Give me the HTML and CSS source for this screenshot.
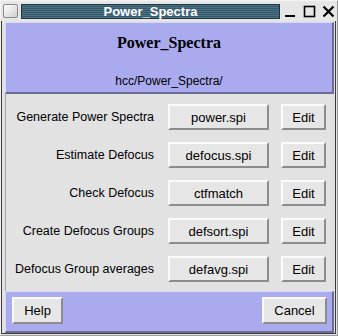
FILE: index.html
```html
<!DOCTYPE html>
<html lang="en">
<head>
    <meta charset="UTF-8">
    <title>Power_Spectra</title>
    <link rel="stylesheet" href="styles.css">
</head>
<body>
    <div class="window">
        <div class="titlebar">
            <div class="win-icon"></div>
            <div class="win-title">Power_Spectra</div>
            <div class="win-controls">
                <svg width="13" height="13" viewBox="0 0 13 13"><rect x="1" y="10" width="10" height="2" fill="#000"/></svg>
                <svg width="13" height="13" viewBox="0 0 13 13"><rect x="1.5" y="1.5" width="10" height="10" fill="none" stroke="#000" stroke-width="1.6"/></svg>
                <svg width="13" height="13" viewBox="0 0 13 13"><path d="M1.5 1.5 L11.5 11.5 M11.5 1.5 L1.5 11.5" stroke="#000" stroke-width="2.2"/></svg>
            </div>
        </div>

        <div class="client">
            <div class="header">
                <h1>Power_Spectra</h1>
                <p class="path">hcc/Power_Spectra/</p>
            </div>

            <div class="rows">
                <span class="label">Generate Power Spectra</span>
                <button class="btn">power.spi</button>
                <button class="btn">Edit</button>

                <span class="label">Estimate Defocus</span>
                <button class="btn">defocus.spi</button>
                <button class="btn">Edit</button>

                <span class="label">Check Defocus</span>
                <button class="btn">ctfmatch</button>
                <button class="btn">Edit</button>

                <span class="label">Create Defocus Groups</span>
                <button class="btn">defsort.spi</button>
                <button class="btn">Edit</button>

                <span class="label">Defocus Group averages</span>
                <button class="btn">defavg.spi</button>
                <button class="btn">Edit</button>
            </div>

            <div class="footer">
                <button class="btn help">Help</button>
                <button class="btn cancel">Cancel</button>
            </div>
        </div>
    </div>
</body>
</html>
```

FILE: styles.css
```css
body {
    margin: 0;
    padding: 0;
    font-family: "Liberation Sans", Arial, sans-serif;
}
.window {
    width: 338px;
    height: 336px;
    box-sizing: border-box;
    background-color: #e6e6e6;
    border: 1px solid #f4f4f4;
    border-right-color: #9a9a9a;
    border-bottom-color: #9a9a9a;
    display: flex;
    flex-direction: column;
}
.titlebar {
    height: 18px;
    display: flex;
    align-items: center;
    padding: 1px 2px 0 2px;
}
.win-icon {
    width: 13px;
    height: 12px;
    border: 1px solid #8a8a8a;
    border-radius: 2px;
    background: linear-gradient(135deg, #ffffff, #cfcfcf);
    margin-right: 3px;
}
.win-title {
    width: 258px;
    height: 13px;
    border: 1px solid #1d3340;
    background: repeating-linear-gradient(to bottom, #4a7083 0, #4a7083 1px, #37596a 1px, #37596a 2px);
    color: #ffffff;
    font-weight: bold;
    font-size: 13px;
    line-height: 13px;
    text-align: center;
}
.win-controls {
    display: flex;
    gap: 6px;
    margin-left: 4px;
}
.client {
    flex: 1;
    margin: 1px 1px 1px 0;
    border: 1px solid #3a3a3a;
    border-top: none;
    background-color: #e2e2e2;
    display: flex;
    flex-direction: column;
    padding: 1px 1px 0 3px;
}
.header {
    height: 72px;
    box-sizing: border-box;
    background-color: #aaaaee;
    border: 1px solid #d8d8f8;
    border-right: 2px solid #6c6c96;
    border-bottom: 2px solid #6c6c96;
    text-align: center;
}
h1 {
    margin: 10px 0 0 0;
    font-family: "Liberation Serif", "Times New Roman", serif;
    font-size: 16px;
    line-height: 20px;
    color: #000;
}
.path {
    margin: 21px 0 0 0;
    font-size: 12px;
    color: #000;
}
.rows {
    display: grid;
    grid-template-columns: 1fr 101px 45px;
    grid-auto-rows: 26px;
    column-gap: 12px;
    row-gap: 12px;
    padding: 10px 8px 9px 0;
    border-left: 1px solid #a8a8a8;
    align-items: center;
}
.label {
    text-align: right;
    font-size: 12.5px;
    color: #000;
    padding-right: 2px;
}
.btn {
    height: 26px;
    box-sizing: border-box;
    background-color: #e6e6e6;
    border: 2px solid #8c8c8c;
    border-top-color: #fbfbfb;
    border-left-color: #fbfbfb;
    font-family: "Liberation Sans", Arial, sans-serif;
    font-size: 13px;
    color: #000;
    padding: 0;
}
.footer {
    flex: 1;
    background-color: #aaaaee;
    border: 1px solid #d8d8f8;
    border-right: 2px solid #6c6c96;
    border-bottom: 2px solid #6c6c96;
    display: flex;
    justify-content: space-between;
    align-items: flex-start;
    padding: 5px 5px 0 6px;
}
.help {
    width: 51px;
    height: 27px;
}
.cancel {
    width: 65px;
    height: 27px;
}
```
